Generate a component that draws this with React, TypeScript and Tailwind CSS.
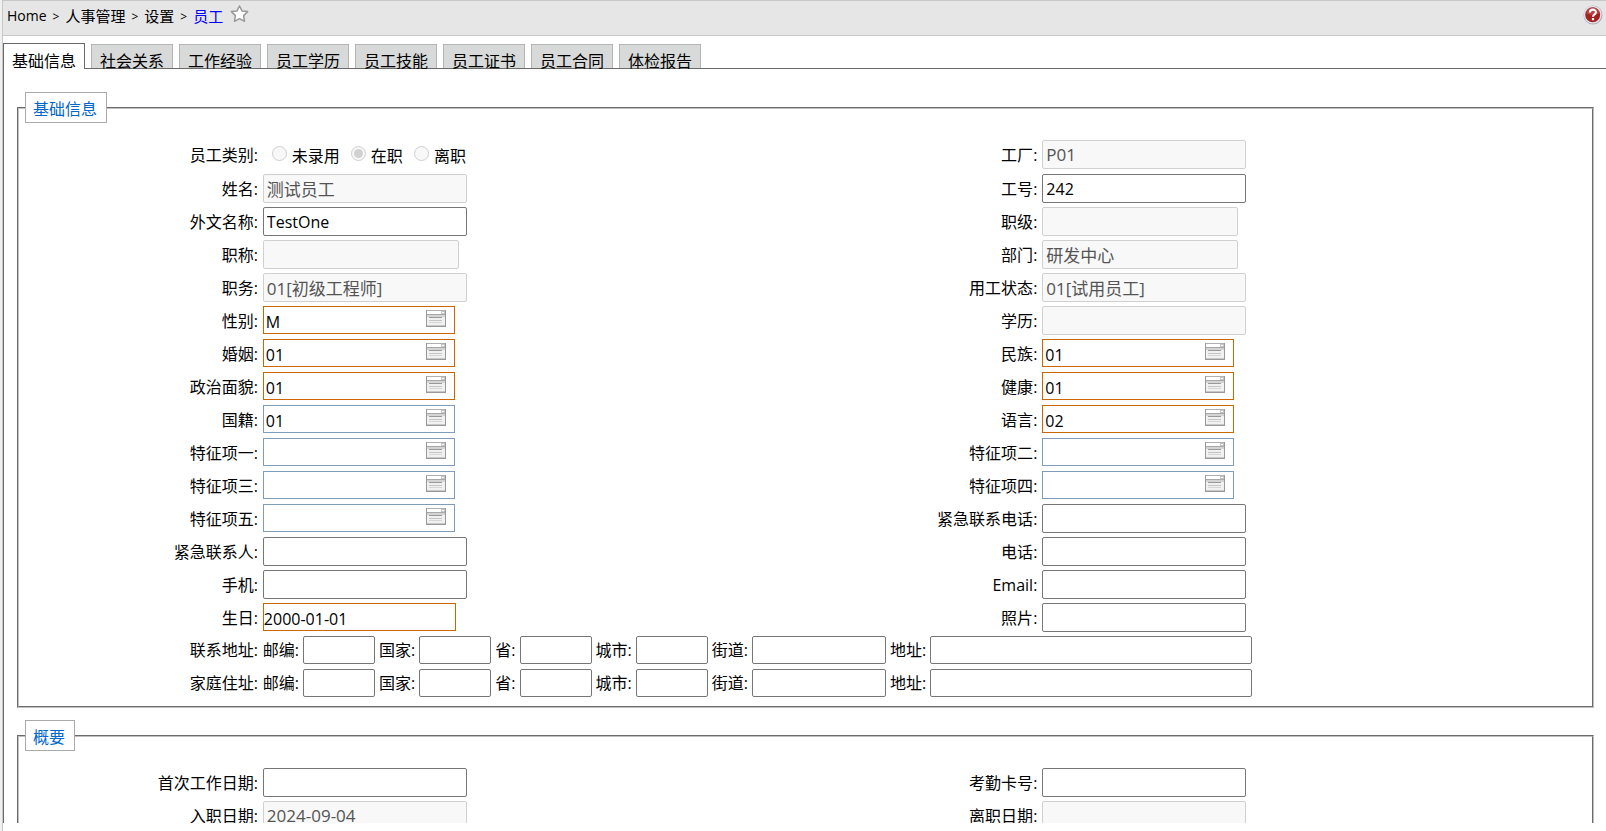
import type { ReactNode } from "react";

type Kind = "text" | "disabled" | "shortDisabled" | "lookup" | "requiredLookup" | "date";

interface Field {
  id: string;
  label: string;
  kind: Kind;
  value?: string;
}

const tabs = ["基础信息", "社会关系", "工作经验", "员工学历", "员工技能", "员工证书", "员工合同", "体检报告"];

const statuses = ["未录用", "在职", "离职"];

const basicRows: Field[][] = [
  [
    { id: "name", label: "姓名", kind: "disabled", value: "测试员工" },
    { id: "workNo", label: "工号", kind: "text", value: "242" },
  ],
  [
    { id: "foreignName", label: "外文名称", kind: "text", value: "TestOne" },
    { id: "rank", label: "职级", kind: "shortDisabled" },
  ],
  [
    { id: "title", label: "职称", kind: "shortDisabled" },
    { id: "department", label: "部门", kind: "shortDisabled", value: "研发中心" },
  ],
  [
    { id: "duty", label: "职务", kind: "disabled", value: "01[初级工程师]" },
    { id: "employStatus", label: "用工状态", kind: "disabled", value: "01[试用员工]" },
  ],
  [
    { id: "gender", label: "性别", kind: "requiredLookup", value: "M" },
    { id: "education", label: "学历", kind: "disabled" },
  ],
  [
    { id: "marriage", label: "婚姻", kind: "requiredLookup", value: "01" },
    { id: "nation", label: "民族", kind: "requiredLookup", value: "01" },
  ],
  [
    { id: "politics", label: "政治面貌", kind: "requiredLookup", value: "01" },
    { id: "health", label: "健康", kind: "requiredLookup", value: "01" },
  ],
  [
    { id: "nationality", label: "国籍", kind: "lookup", value: "01" },
    { id: "language", label: "语言", kind: "requiredLookup", value: "02" },
  ],
  [
    { id: "feature1", label: "特征项一", kind: "lookup" },
    { id: "feature2", label: "特征项二", kind: "lookup" },
  ],
  [
    { id: "feature3", label: "特征项三", kind: "lookup" },
    { id: "feature4", label: "特征项四", kind: "lookup" },
  ],
  [
    { id: "feature5", label: "特征项五", kind: "lookup" },
    { id: "emergencyPhone", label: "紧急联系电话", kind: "text" },
  ],
  [
    { id: "emergencyContact", label: "紧急联系人", kind: "text" },
    { id: "phone", label: "电话", kind: "text" },
  ],
  [
    { id: "mobile", label: "手机", kind: "text" },
    { id: "email", label: "Email", kind: "text" },
  ],
  [
    { id: "birthday", label: "生日", kind: "date", value: "2000-01-01" },
    { id: "photo", label: "照片", kind: "text" },
  ],
];

const summaryRows: Field[][] = [
  [
    { id: "firstWorkDate", label: "首次工作日期", kind: "text" },
    { id: "cardNo", label: "考勤卡号", kind: "text" },
  ],
  [
    { id: "entryDate", label: "入职日期", kind: "disabled", value: "2024-09-04" },
    { id: "leaveDate", label: "离职日期", kind: "disabled" },
  ],
];

const addressParts = [
  { key: "zip", label: "邮编", width: "w-[72px]" },
  { key: "country", label: "国家", width: "w-[72px]" },
  { key: "province", label: "省", width: "w-[72px]" },
  { key: "city", label: "城市", width: "w-[72px]" },
  { key: "street", label: "街道", width: "w-[134px]" },
  { key: "detail", label: "地址", width: "w-[322px]" },
];

const inputStyles: Record<Kind, string> = {
  text: "h-[29px] w-[204px] rounded-[2px] border-[#767676] bg-white px-[3px] text-base",
  disabled: "h-[29px] w-[204px] rounded-[2px] border-[#d0d0d0] bg-[#f8f8f8] px-[3px] text-[17px] text-[#545454]",
  shortDisabled: "h-[29px] w-[196px] rounded-[2px] border-[#d0d0d0] bg-[#f8f8f8] px-[3px] text-[17px] text-[#545454]",
  lookup: "h-7 w-48 border-[#7f9db9] bg-white pt-[3px] pr-8 pl-[2px] text-base",
  requiredLookup: "h-7 w-48 border-[#cc6600] bg-white pt-[3px] pr-8 pl-[2px] text-base",
  date: "h-7 w-[193px] border-[#cc6600] bg-white pt-[3px] text-base",
};

const LookupIcon = () => (
  <svg width="20" height="17" viewBox="0 0 20 17" shapeRendering="crispEdges" aria-hidden="true">
    <rect width="20" height="17" fill="#999999" />
    <rect x="1" y="1" width="18" height="15" fill="#f1f1f1" />
    <rect x="1" y="0" width="18" height="1" fill="#b0b0b0" />
    <rect x="1" y="1" width="14" height="3" fill="#ffffff" />
    <rect x="15" y="1" width="4" height="3" fill="#c4c4c4" />
    <rect x="16" y="2" width="2" height="1" fill="#ffffff" />
    <rect x="1" y="4" width="18" height="1" fill="#a8a8a8" />
    <rect x="1" y="5" width="18" height="2" fill="#d4d4d4" />
    <rect x="3" y="7" width="13" height="1" fill="#999999" />
    <rect x="3" y="10" width="13" height="1" fill="#c4c4c4" />
    <rect x="3" y="12" width="13" height="1" fill="#d6d6d6" />
    <rect x="1" y="15" width="18" height="1" fill="#c8c8c8" />
  </svg>
);

const StarIcon = () => (
  <svg width="19" height="18" viewBox="0 0 19 18" aria-hidden="true">
    <path
      d="M9.5 1l2.5 4.9 5.6.7-4 4 .9 5.7-5-2.6-5 2.6.9-5.7-4-4 5.6-.7z"
      fill="#fff"
      stroke="#999"
      strokeWidth="1.5"
      strokeLinejoin="round"
    />
  </svg>
);

const HelpIcon = () => (
  <svg width="20" height="20" viewBox="0 0 20 20" aria-hidden="true">
    <circle cx="10" cy="10" r="9.5" fill="#a9adb8" />
    <circle cx="9.7" cy="9.6" r="8.9" fill="#e3e5ea" />
    <circle cx="9.7" cy="9.8" r="7.5" fill="#a32222" />
    <path d="M3.2 8.2a6.6 6.6 0 0 1 13 0c-3 2-9 2-13 0z" fill="#b84444" />
    <path d="M6.9 7.6c0-3.9 6-3.8 6-.4 0 2.3-2.9 2.3-2.9 4.6" fill="none" stroke="#fff" strokeWidth="2.1" />
    <rect x="8.9" y="13" width="2.2" height="2.2" fill="#fff" />
  </svg>
);

const FieldLabel = ({ htmlFor, children }: { htmlFor: string; children: ReactNode }) => (
  <label htmlFor={htmlFor} className="pt-px pr-[2px] text-right leading-[29px] whitespace-nowrap">
    {children}:
  </label>
);

const FieldInput = ({ field }: { field: Field }) => {
  const isLookup = field.kind === "lookup" || field.kind === "requiredLookup";
  const isDisabled = field.kind === "disabled" || field.kind === "shortDisabled";

  return (
    <div className="pl-[3px]">
      <div className="relative w-fit">
        <input
          id={field.id}
          type="text"
          defaultValue={field.value}
          disabled={isDisabled}
          className={`block border ${inputStyles[field.kind]}`}
        />
        {isLookup && (
          <button type="button" aria-label={`选择${field.label}`} className="absolute top-1 right-[9px]">
            <LookupIcon />
          </button>
        )}
      </div>
    </div>
  );
};

const gridClass = "mx-[7px] grid auto-rows-[33px] grid-cols-[15%_35%_15%_35%] items-start";

const Rows = ({ rows }: { rows: Field[][] }) => (
  <div className={gridClass}>
    {rows.flat().map((field) => (
      <div key={field.id} className="contents">
        <FieldLabel htmlFor={field.id}>{field.label}</FieldLabel>
        <FieldInput field={field} />
      </div>
    ))}
  </div>
);

const AddressRow = ({ id, label }: { id: string; label: string }) => (
  <div role="group" aria-label={label} className={gridClass}>
    <span className="pr-[2px] text-right leading-[29px] whitespace-nowrap">{label}:</span>
    <div className="col-span-3 flex gap-1 pl-[3px]">
      {addressParts.map((part) => (
        <div key={part.key} className="flex gap-1">
          <label htmlFor={`${id}-${part.key}`} className="leading-[29px] whitespace-nowrap">
            {part.label}:
          </label>
          <input
            id={`${id}-${part.key}`}
            type="text"
            className={`h-7 rounded-[2px] border border-[#767676] bg-white px-[3px] ${part.width}`}
          />
        </div>
      ))}
    </div>
  </div>
);

const Section = ({ title, children }: { title: string; children: ReactNode }) => (
  <fieldset className="mr-3 mb-3 ml-[13px] border-2 border-[#c0c0c0] pb-1 [border-style:groove]">
    <legend className="mb-[17px] ml-[6px] border border-[#aaaaaa] bg-white px-[7px] pt-[3px] leading-[26px] text-[#0066cc]">
      <span className="pr-[2px]">{title}</span>
    </legend>
    {children}
  </fieldset>
);

const App = () => {
  return (
    <div className="h-screen overflow-hidden border-l-2 border-[#f0f0f0] bg-white font-['Open_Sans','Noto_Sans_CJK_SC',sans-serif] text-base text-black">
      <div className="flex h-full flex-col border-l border-[#c8c8c8] pb-2">
        <header className="flex h-9 shrink-0 items-start justify-between border-y border-[#c8c8c8] bg-[#e6e6e6] pt-1 pr-[3px] pl-1">
          <nav className="flex gap-[6px] text-[15px] leading-[22px]">
            <a href="#home" className="text-sm leading-[22px]">Home</a>
            <span className="text-xs leading-6">&gt;</span>
            <a href="#hr">人事管理</a>
            <span className="text-xs leading-6">&gt;</span>
            <a href="#settings">设置</a>
            <span className="text-xs leading-6">&gt;</span>
            <a href="#employee" className="text-[#0000ff]">员工</a>
            <button type="button" aria-label="收藏" className="h-[18px] pl-px">
              <StarIcon />
            </button>
          </nav>
          <button type="button" aria-label="帮助">
            <HelpIcon />
          </button>
        </header>

        <div role="tablist" className="mt-[7px] flex h-[26px] shrink-0 items-end gap-[6px] border-b border-[#6b6b6b]">
          {tabs.map((tab, index) => (
            <button
              key={tab}
              type="button"
              role="tab"
              aria-selected={index === 0}
              className={
                index === 0
                  ? "-mb-px h-[26px] border border-b-0 border-[#6b6b6b] bg-white px-2 pt-2 leading-[18px] whitespace-nowrap"
                  : "h-6 border border-b-0 border-[#b4b4b4] bg-[#d8dad9] px-2 pt-[7px] leading-[18px] whitespace-nowrap"
              }
            >
              {tab}
            </button>
          ))}
        </div>

        <main className="min-h-0 flex-1 overflow-hidden border-l border-[#6b6b6b] pt-[23px]">
          <Section title="基础信息">
            <div className="mx-[7px] grid h-[34px] grid-cols-[15%_35%_15%_35%] items-start">
              <span className="pt-px pr-[2px] text-right leading-[29px] whitespace-nowrap">员工类别:</span>
              <div role="radiogroup" aria-label="员工类别" className="flex gap-[11px] pl-3">
                {statuses.map((status) => (
                  <label key={status} className="flex gap-[5px] pt-px leading-[31px] whitespace-nowrap">
                    <input
                      type="radio"
                      name="status"
                      defaultChecked={status === "在职"}
                      disabled
                      className="mt-[5px] size-[15px]"
                    />
                    {status}
                  </label>
                ))}
              </div>
              <FieldLabel htmlFor="factory">工厂</FieldLabel>
              <FieldInput field={{ id: "factory", label: "工厂", kind: "disabled", value: "P01" }} />
            </div>
            <Rows rows={basicRows} />
            <AddressRow id="contact" label="联系地址" />
            <AddressRow id="home" label="家庭住址" />
          </Section>

          <Section title="概要">
            <Rows rows={summaryRows} />
          </Section>
        </main>
      </div>
    </div>
  );
};

export default App;
